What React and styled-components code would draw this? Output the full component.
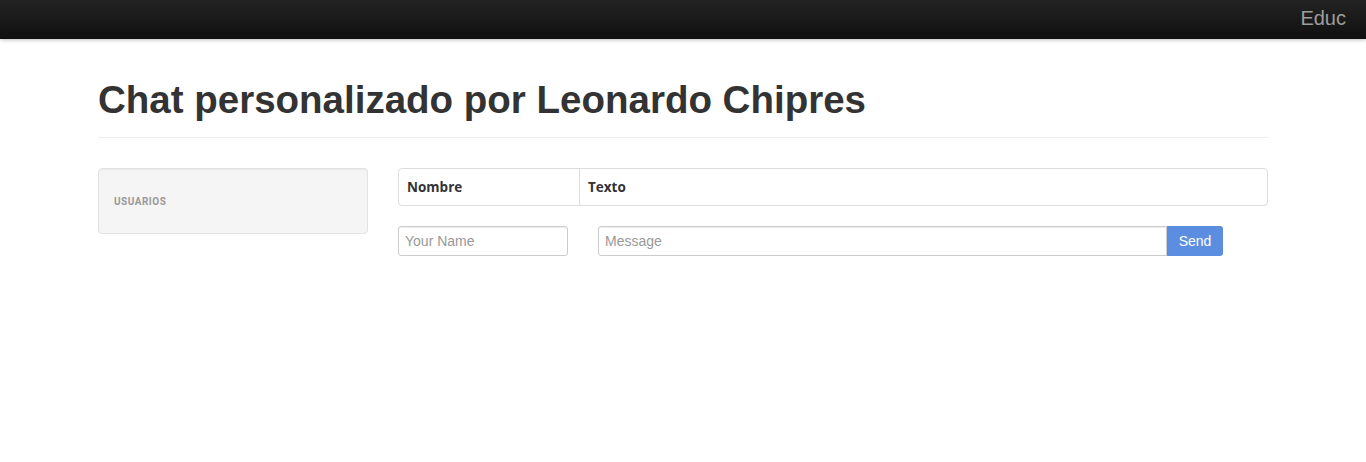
import React from 'react'
import styled, { createGlobalStyle } from 'styled-components'

const GlobalStyle = createGlobalStyle`
  body {
    margin: 0;
    background: #fff;
    font-family: "Liberation Sans", Arial, sans-serif;
    font-size: 14px;
    color: #333;
  }
  * { box-sizing: border-box; }
`

const Navbar = styled.div`
  height: 39px;
  background: linear-gradient(to bottom, #232323 0%, #101010 100%);
  box-shadow: 0 1px 4px rgba(0, 0, 0, 0.25);
  display: flex;
  align-items: center;
  justify-content: flex-end;
  padding: 0 20px 3px;
`

const Brand = styled.span`
  color: #9d9d9d;
  font-size: 20px;
  line-height: 1;
`

const Container = styled.div`
  width: 1170px;
  margin: 0 auto;
`

const Header = styled.div`
  padding-bottom: 16px;
  margin: 40px 0 30px;
  border-bottom: 1px solid #eee;
`

const Title = styled.h1`
  margin: 0;
  font-size: 38.5px;
  font-weight: bold;
  line-height: 1.1;
  color: #333;
`

const Layout = styled.div`
  display: grid;
  grid-template-columns: 270px 870px;
  column-gap: 30px;
  align-items: start;
`

const Well = styled.div`
  height: 66px;
  background: #f5f5f5;
  border: 1px solid #e3e3e3;
  border-radius: 4px;
  box-shadow: inset 0 1px 1px rgba(0, 0, 0, 0.05);
  display: flex;
  align-items: center;
  padding: 0 15px;
`

const WellLabel = styled.span`
  font-family: Roboto, "Open Sans", sans-serif;
  font-size: 10px;
  font-weight: bold;
  letter-spacing: 0.5px;
  color: #999;
  text-transform: uppercase;
`

const Table = styled.table`
  width: 100%;
  border: 1px solid #ddd;
  border-radius: 4px;
  border-spacing: 0;
  border-collapse: separate;
`

const Th = styled.th`
  height: 36px;
  padding: 0 8px;
  text-align: left;
  font-family: "Open Sans", sans-serif;
  font-size: 13.5px;
  font-weight: bold;
  color: #333;
  width: ${p => (p.$w ? p.$w + 'px' : 'auto')};
  border-left: ${p => (p.$first ? 'none' : '1px solid #ddd')};
`

const Form = styled.div`
  display: flex;
  margin-top: 20px;
  gap: 30px;
`

const Input = styled.input`
  height: 30px;
  width: ${p => p.$w}px;
  border: 1px solid #ccc;
  border-radius: ${p => (p.$joined ? '3px 0 0 3px' : '3px')};
  box-shadow: inset 0 1px 1px rgba(0, 0, 0, 0.075);
  padding: 0 6px;
  font-family: "Liberation Sans", Arial, sans-serif;
  font-size: 14px;
  color: #555;
  &::placeholder { color: #999; }
`

const Group = styled.div`
  display: flex;
`

const SendButton = styled.button`
  height: 30px;
  width: 56px;
  border: none;
  border-radius: 0 3px 3px 0;
  background: #5b8de0;
  color: #fff;
  font-family: "Liberation Sans", Arial, sans-serif;
  font-size: 14px;
  padding: 0;
`

export default function App () {
  return (
    <>
      <GlobalStyle />
      <Navbar>
        <Brand>Educ</Brand>
      </Navbar>
      <Container>
        <Header>
          <Title>Chat personalizado por Leonardo Chipres</Title>
        </Header>
        <Layout>
          <Well>
            <WellLabel>Usuarios</WellLabel>
          </Well>
          <div>
            <Table>
              <thead>
                <tr>
                  <Th $first $w={180}>Nombre</Th>
                  <Th>Texto</Th>
                </tr>
              </thead>
            </Table>
            <Form>
              <Input $w={170} placeholder='Your Name' />
              <Group>
                <Input $w={569} $joined placeholder='Message' />
                <SendButton>Send</SendButton>
              </Group>
            </Form>
          </div>
        </Layout>
      </Container>
    </>
  )
}
